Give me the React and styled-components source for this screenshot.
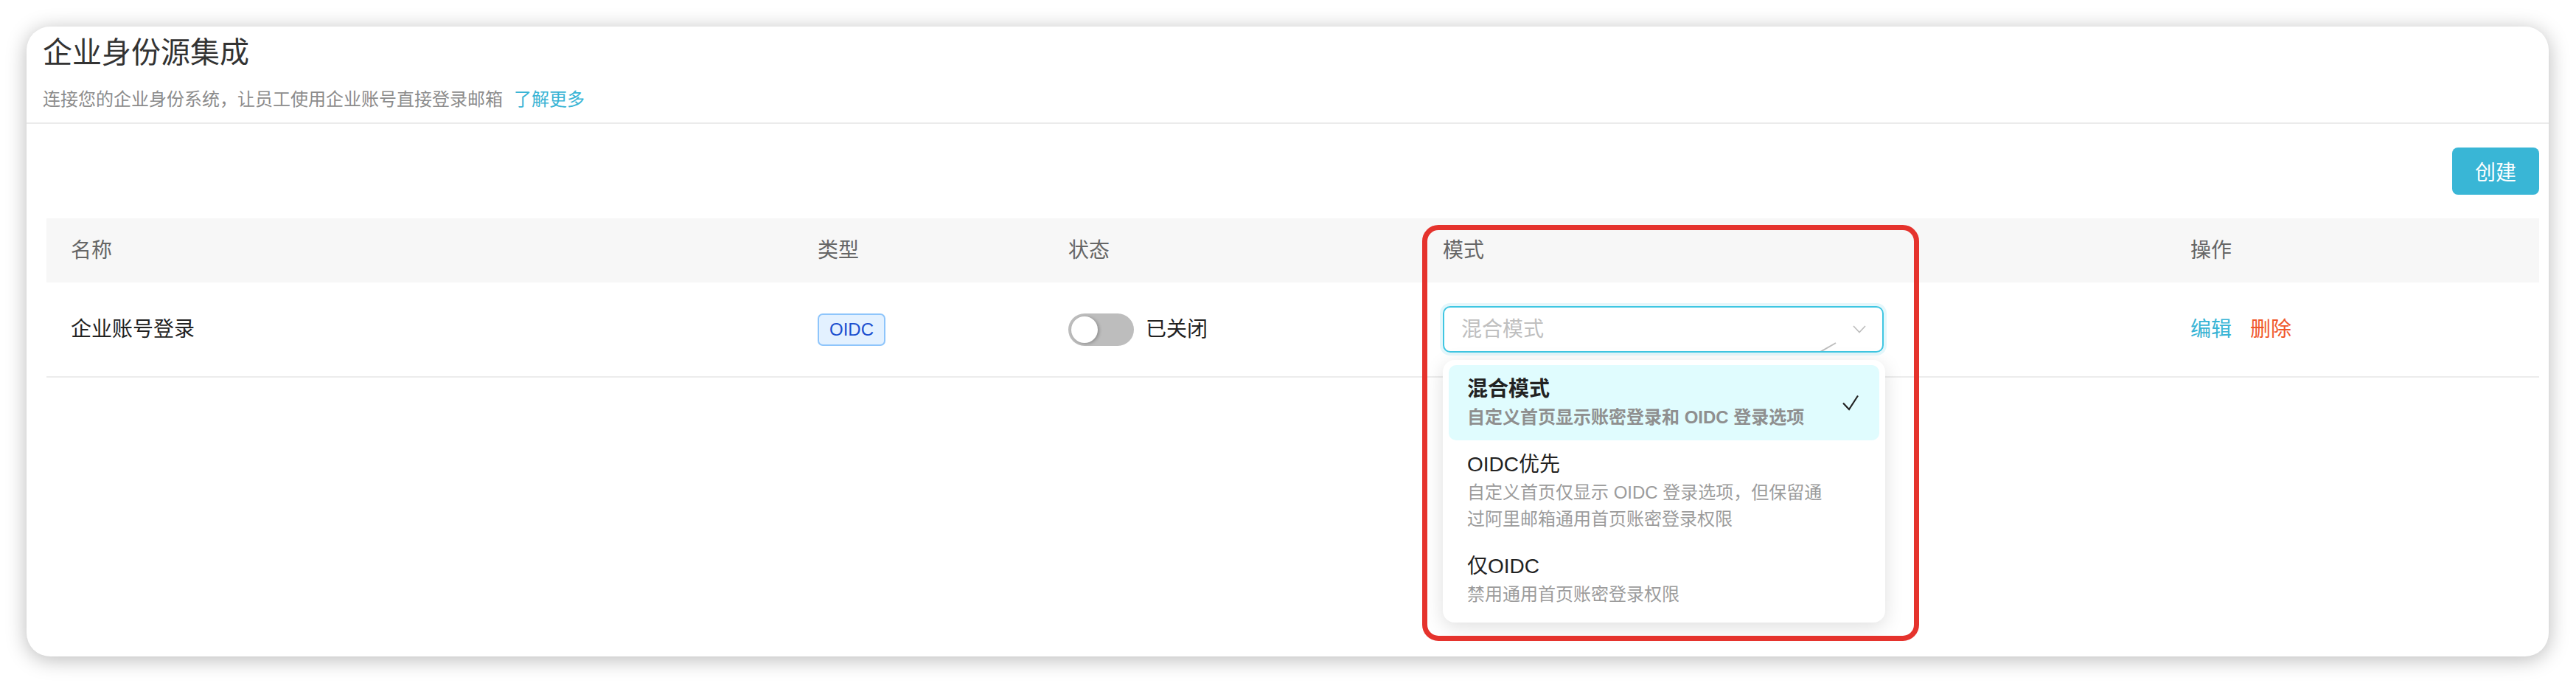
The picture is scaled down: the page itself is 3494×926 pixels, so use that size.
import React from 'react';
import styled, { createGlobalStyle } from 'styled-components';

const GlobalStyle = createGlobalStyle`
  html, body {
    margin: 0;
    padding: 0;
    background: #ffffff;
  }
  body {
    font-family: "Liberation Sans", "Noto Sans CJK SC", sans-serif;
    color: #222;
  }
`;

const Page = styled.div`
  padding: 36px 37px 36px 36px;
`;

const Card = styled.div`
  background: #fff;
  border-radius: 32px;
  min-height: 854px;
  box-shadow: 0 4px 28px rgba(0, 0, 0, 0.28);
  box-sizing: border-box;
`;

const Header = styled.div`
  padding: 7px 22px 14px;
  border-bottom: 2px solid #ebebeb;
`;

const Title = styled.h1`
  margin: 0;
  font-size: 40px;
  line-height: 56px;
  font-weight: 400;
  color: #333;
`;

const Subtitle = styled.p`
  margin: 19px 0 0;
  font-size: 24px;
  line-height: 34px;
  color: #8c8c8c;
`;

const LearnMore = styled.a`
  color: #38b4d5;
  margin-left: 15px;
  text-decoration: none;
`;

const Body = styled.div`
  padding: 32px 13px 0 27px;
`;

const Toolbar = styled.div`
  display: flex;
  justify-content: flex-end;
`;

const PrimaryButton = styled.button`
  height: 64px;
  padding: 0 31px;
  border: none;
  border-radius: 8px;
  background: #39b6d6;
  color: #fff;
  font-family: inherit;
  font-size: 28px;
`;

const Table = styled.div`
  margin-top: 32px;
`;

const Row = styled.div`
  display: grid;
  grid-template-columns: 1013px 340px 508px 1014px 1fr;
  align-items: center;
  height: ${p => (p.head ? '87px' : '127px')};
  background: ${p => (p.head ? '#f7f7f7' : 'transparent')};
  border-bottom: ${p => (p.head ? 'none' : '2px solid #ececec')};
  font-size: 28px;
  color: ${p => (p.head ? '#666' : '#222')};
`;

const Cell = styled.div`
  position: relative;
  padding-left: 33px;
  display: flex;
  align-items: center;
  gap: 16px;
  line-height: 40px;
`;

const Highlight = styled.div`
  position: absolute;
  left: 5px;
  top: -15px;
  width: 674px;
  height: 564px;
  border: 7px solid #e5332d;
  border-radius: 22px;
  box-sizing: border-box;
  pointer-events: none;
  z-index: 5;
`;

const Tag = styled.span`
  display: inline-block;
  padding: 0 14px;
  height: 44px;
  line-height: 40px;
  box-sizing: border-box;
  border: 2px solid #8ec5fb;
  border-radius: 7px;
  background: #e3f1ff;
  color: #1b4fcf;
  font-size: 24px;
`;

const Switch = styled.span`
  position: relative;
  width: 89px;
  height: 44px;
  border-radius: 22px;
  background: #bdbdbd;
  flex-shrink: 0;

  &::after {
    content: '';
    position: absolute;
    left: 4px;
    top: 4px;
    width: 36px;
    height: 36px;
    border-radius: 50%;
    background: #fff;
    box-shadow: 2px 1px 4px rgba(0, 0, 0, 0.25);
  }
`;

const SelectWrap = styled.div`
  position: relative;
  width: 598px;
`;

const SelectBox = styled.div`
  position: relative;
  height: 63px;
  box-sizing: border-box;
  border: 2px solid #3fc6e2;
  border-radius: 10px;
  box-shadow: 0 0 0 4px rgba(63, 198, 226, 0.14);
  display: flex;
  align-items: center;
  justify-content: space-between;
  padding: 0 22px 0 23px;
  overflow: hidden;
  background: #fff;
`;

const Placeholder = styled.span`
  color: #bfbfbf;
  font-size: 28px;
`;

const Stray = styled.svg`
  position: absolute;
  left: 509px;
  bottom: -2px;
`;

const Dropdown = styled.div`
  position: absolute;
  top: calc(100% + 10px);
  left: 0;
  width: 600px;
  padding: 7px 8px;
  box-sizing: border-box;
  background: #fff;
  border-radius: 16px;
  box-shadow: 0 6px 26px rgba(0, 0, 0, 0.13);
  z-index: 4;
`;

const Option = styled.div`
  position: relative;
  padding: 13px 25px;
  border-radius: 10px;
  background: ${p => (p.selected ? '#e0fcfe' : 'transparent')};
`;

const OptionTitle = styled.div`
  font-size: 28px;
  line-height: 40px;
  color: #222;
  font-weight: ${p => (p.selected ? 700 : 400)};
`;

const OptionDesc = styled.div`
  font-size: 24px;
  line-height: 36px;
  color: ${p => (p.selected ? '#8f8f8f' : '#9c9c9c')};
  font-weight: ${p => (p.selected ? 600 : 400)};
  max-width: 495px;
`;

const Check = styled.svg`
  position: absolute;
  right: 27px;
  top: 50%;
  transform: translateY(-50%);
`;

const Actions = styled.div`
  display: flex;
  gap: 25px;
`;

const ActionLink = styled.a`
  color: ${p => (p.danger ? '#f0572a' : '#38b4d5')};
  text-decoration: none;
`;

const modes = [
  { title: '混合模式', desc: '自定义首页显示账密登录和 OIDC 登录选项', selected: true },
  { title: 'OIDC优先', desc: '自定义首页仅显示 OIDC 登录选项，但保留通过阿里邮箱通用首页账密登录权限' },
  { title: '仅OIDC', desc: '禁用通用首页账密登录权限' },
];

const App = () => {
  return (
    <>
      <GlobalStyle />
      <Page>
        <Card>
          <Header>
            <Title>企业身份源集成</Title>
            <Subtitle>
              连接您的企业身份系统，让员工使用企业账号直接登录邮箱
              <LearnMore>了解更多</LearnMore>
            </Subtitle>
          </Header>
          <Body>
            <Toolbar>
              <PrimaryButton>创建</PrimaryButton>
            </Toolbar>
            <Table>
              <Row head>
                <Cell>名称</Cell>
                <Cell>类型</Cell>
                <Cell>状态</Cell>
                <Cell>
                  模式
                  <Highlight />
                </Cell>
                <Cell>操作</Cell>
              </Row>
              <Row>
                <Cell>企业账号登录</Cell>
                <Cell>
                  <Tag>OIDC</Tag>
                </Cell>
                <Cell>
                  <Switch />
                  已关闭
                </Cell>
                <Cell>
                  <SelectWrap>
                    <SelectBox>
                      <Placeholder>混合模式</Placeholder>
                      <svg width="18" height="11" viewBox="0 0 18 11">
                        <path d="M1 1 L9 9.5 L17 1" fill="none" stroke="#bdbdbd" strokeWidth="1.6" />
                      </svg>
                      <Stray width="24" height="14" viewBox="0 0 24 14">
                        <path d="M1 13 L22 1" fill="none" stroke="#bdbdbd" strokeWidth="2" />
                      </Stray>
                    </SelectBox>
                    <Dropdown>
                      {modes.map(m => (
                        <Option key={m.title} selected={m.selected}>
                          <OptionTitle selected={m.selected}>{m.title}</OptionTitle>
                          <OptionDesc selected={m.selected}>{m.desc}</OptionDesc>
                          {m.selected && (
                            <Check width="24" height="22" viewBox="0 0 24 22">
                              <path d="M2 11.5 L10 20 L22 1.5" fill="none" stroke="#222" strokeWidth="2.2" />
                            </Check>
                          )}
                        </Option>
                      ))}
                    </Dropdown>
                  </SelectWrap>
                </Cell>
                <Cell>
                  <Actions>
                    <ActionLink>编辑</ActionLink>
                    <ActionLink danger>删除</ActionLink>
                  </Actions>
                </Cell>
              </Row>
            </Table>
          </Body>
        </Card>
      </Page>
    </>
  );
};

export default App;
